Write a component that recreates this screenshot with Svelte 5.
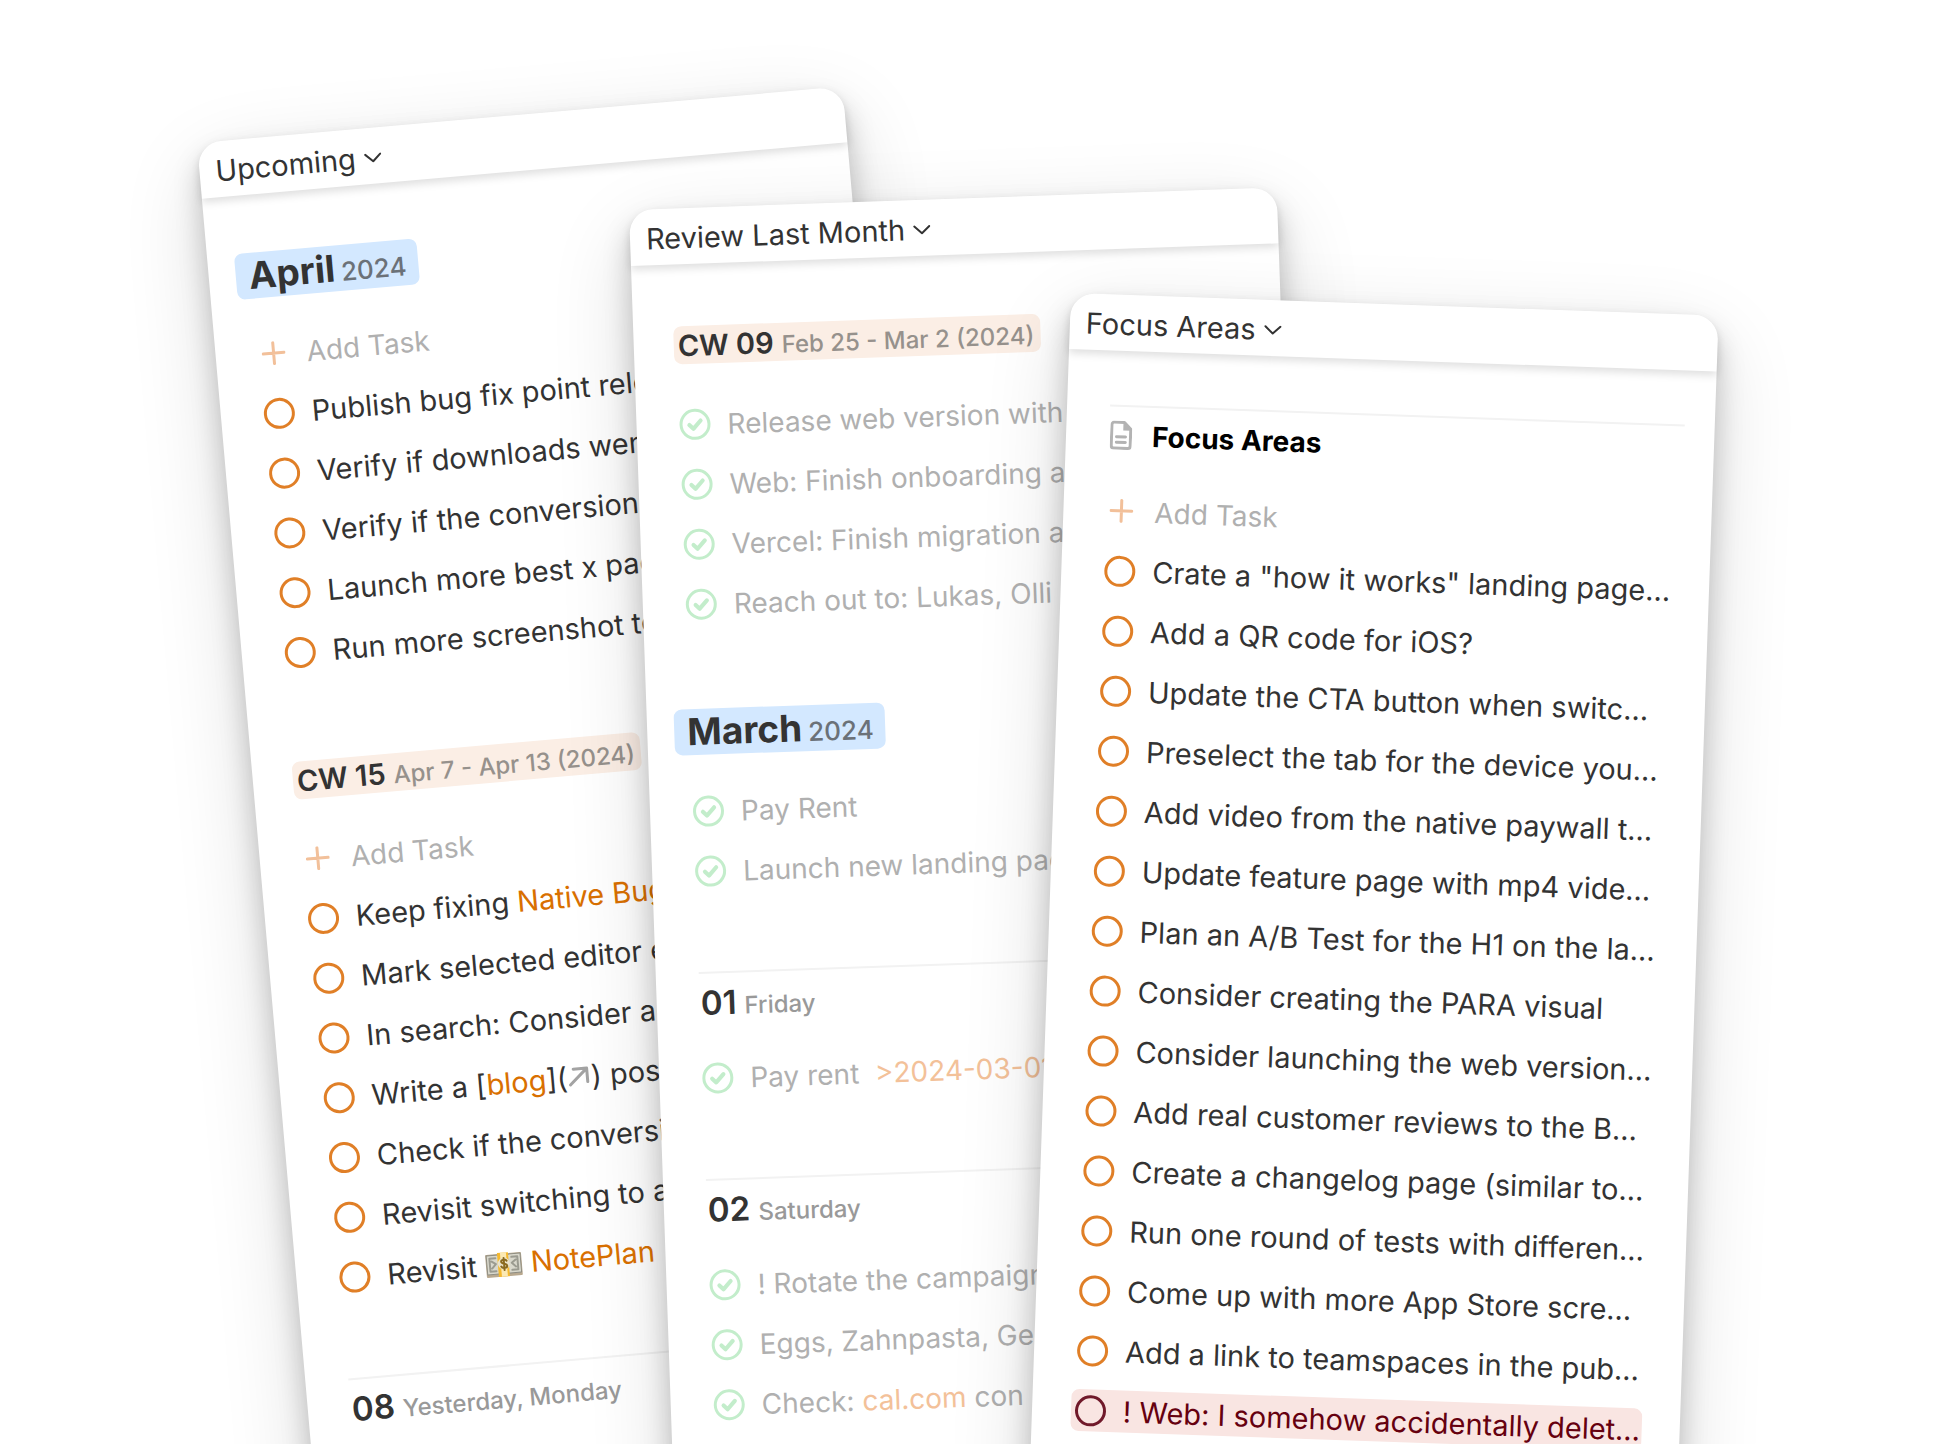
<script>
  const open = (...parts) => ({ done: false, parts });
  const done = (...parts) => ({ done: true, parts });
  const link = (text) => ({ kind: 'link', text });
  const arrow = { kind: 'arrow' };
  const cash = { kind: 'cash' };

  const cards = [
    {
      id: 'upcoming',
      title: 'Upcoming',
      sections: [
        {
          kind: 'month',
          title: 'April',
          detail: '2024',
          add: true,
          tasks: [
            open('Publish bug fix point release'),
            open('Verify if downloads went up'),
            open('Verify if the conversion'),
            open('Launch more best x pages'),
            open('Run more screenshot tests')
          ]
        },
        {
          kind: 'week',
          title: 'CW 15',
          detail: 'Apr 7 - Apr 13 (2024)',
          add: true,
          tasks: [
            open('Keep fixing ', link('Native Bugs')),
            open('Mark selected editor entry'),
            open('In search: Consider adding'),
            open('Write a [', link('blog'), '](', arrow, ') post'),
            open('Check if the conversion'),
            open('Revisit switching to a'),
            open('Revisit ', cash, ' ', link('NotePlan'))
          ]
        },
        { kind: 'day', title: '08', detail: 'Yesterday, Monday', add: false, tasks: [] }
      ]
    },
    {
      id: 'review',
      title: 'Review Last Month',
      sections: [
        {
          kind: 'week',
          title: 'CW 09',
          detail: 'Feb 25 - Mar 2 (2024)',
          add: false,
          tasks: [
            done('Release web version with'),
            done('Web: Finish onboarding and'),
            done('Vercel: Finish migration and'),
            done('Reach out to: Lukas, Olli')
          ]
        },
        {
          kind: 'month',
          title: 'March',
          detail: '2024',
          add: false,
          tasks: [done('Pay Rent'), done('Launch new landing page')]
        },
        {
          kind: 'day',
          title: '01',
          detail: 'Friday',
          add: false,
          tasks: [done('Pay rent \u00a0', link('>2024-03-01'))]
        },
        {
          kind: 'day',
          title: '02',
          detail: 'Saturday',
          add: false,
          tasks: [
            done('! Rotate the campaign'),
            done('Eggs, Zahnpasta, Gemüse'),
            done('Check: ', link('cal.com'), ' con')
          ]
        }
      ]
    },
    {
      id: 'focus',
      title: 'Focus Areas',
      sections: [
        {
          kind: 'note',
          title: 'Focus Areas',
          add: true,
          tasks: [
            open('Crate a "how it works" landing page…'),
            open('Add a QR code for iOS?'),
            open('Update the CTA button when switc…'),
            open('Preselect the tab for the device you…'),
            open('Add video from the native paywall t…'),
            open('Update feature page with mp4 vide…'),
            open('Plan an A/B Test for the H1 on the la…'),
            open('Consider creating the PARA visual'),
            open('Consider launching the web version…'),
            open('Add real customer reviews to the B…'),
            open('Create a changelog page (similar to…'),
            open('Run one round of tests with differen…'),
            open('Come up with more App Store scre…'),
            open('Add a link to teamspaces in the pub…'),
            { ...open('! Web: I somehow accidentally delet…'), urgent: true }
          ]
        }
      ]
    }
  ];
</script>

<main class="stage">
  {#each cards as card}
    <article class="card {card.id}">
      <header class="bar">
        <button type="button" class="picker">
          {card.title}
          <svg class="chevron" viewBox="0 0 18 10" aria-hidden="true"><path d="M1.5 1.5 9 8.5l7.5-7" /></svg>
        </button>
      </header>

      <div class="content">
        {#each card.sections as section}
          <section>
            <div class="head {section.kind}">
              {#if section.kind === 'note'}
                <svg class="doc" viewBox="0 0 22 29" aria-hidden="true">
                  <path class="outline" d="M4 1.5h10l6.500 6.500V25a2.500 2.500 0 0 1-2.500 2.500H4A2.500 2.500 0 0 1 1.500 25V4A2.500 2.500 0 0 1 4 1.500z" />
                  <path class="fold" d="M13 1v8.500h8.500z" />
                  <path class="outline" d="M6.500 16h9M6.500 21.500h9" />
                </svg>
              {/if}
              <h2>
                <strong>{section.title}</strong>
                {#if section.detail}<small>{section.detail}</small>{/if}
              </h2>
            </div>

            {#if section.add}
              <button type="button" class="row add">
                <svg class="plus" viewBox="0 0 24 24" aria-hidden="true"><path d="M12 1.5v21M1.5 12h21" /></svg>
                <span class="text">Add Task</span>
              </button>
            {/if}

            {#each section.tasks as task}
              <label class="row" class:done={task.done} class:urgent={task.urgent}>
                <span class="tick">
                  <input type="checkbox" checked={task.done} />
                  <svg viewBox="0 0 30 30" aria-hidden="true"><path d="m9.500 15.500 3.800 3.800 7.200-7.800" /></svg>
                </span>
                <span class="text">{#each task.parts as part}{#if part.kind === 'link'}<a href="#note">{part.text}</a>{:else if part.kind === 'arrow'}<svg class="arrow" viewBox="0 0 24 22" aria-hidden="true"><path d="M3 19 20 4M7 3.500h13.500V17" /></svg>{:else if part.kind === 'cash'}<svg class="cash" viewBox="0 0 38 26" aria-hidden="true"><rect class="back" x="1" y="2" width="36" height="23" rx="1" /><rect class="bill" x="2" y="3" width="34" height="19" /><path class="print" d="M5 6h6M5 6v13h6M33 6h-6M33 6v13h-6M7 9l4 3-4 4M31 9l-4 3 4 4" /><path class="band" d="M13 1h11v24H13z" /><path class="sheen" d="M16 1h6v24h-6z" /><circle class="seal" cx="19" cy="12" r="6" /><path class="dollar" d="M22 9.500c-1-2-5.500-1.800-5.500.5 0 2.800 5.700 1.600 5.700 4.500 0 2.500-5 2.500-6 .3M19.200 6.500v12" /></svg>{:else}{part}{/if}{/each}</span>
              </label>
            {/each}
          </section>
        {/each}
      </div>
    </article>
  {/each}
</main>

<style>
  :global(body) {
    margin: 0;
    background: #fff;
  }

  .stage {
    position: relative;
    height: 100vh;
    overflow: hidden;
    font-family: Inter, 'Liberation Sans', sans-serif;
    font-size: 29px;
    line-height: 36px;
    color: #333;
  }

  .card {
    position: absolute;
    box-sizing: border-box;
    width: 33.35%;
    min-height: 125vh;
    border-radius: 24px;
    background: #fff;
    box-shadow:
      0 16px 28px rgba(0, 0, 0, 0.22),
      0 28px 84px rgba(0, 0, 0, 0.14);
    transform-origin: 0 0;
  }

  .upcoming {
    left: 10.15%;
    top: 143px;
    transform: rotate(-5deg);
  }

  .review {
    left: 32.4%;
    top: 210px;
    transform: rotate(-2deg);
  }

  .focus {
    left: 55.15%;
    top: 293px;
    transform: rotate(2deg);
  }

  .bar {
    display: flex;
    align-items: center;
    height: 56px;
    padding: 4px 16px 0;
    box-sizing: border-box;
    border-radius: 24px 24px 0 0;
    box-shadow: 0 4px 8px rgba(0, 0, 0, 0.13);
  }

  button {
    font: inherit;
    color: inherit;
    background: none;
    border: 0;
    padding: 0;
    text-align: left;
    cursor: pointer;
  }

  .picker {
    display: flex;
    align-items: center;
    gap: 8px;
  }

  svg {
    fill: none;
    stroke-linecap: round;
    stroke-linejoin: round;
  }

  .chevron {
    width: 18px;
    height: 10px;
    stroke: #333;
    stroke-width: 2;
  }

  .content {
    display: flex;
    flex-direction: column;
    gap: 71px;
    padding: 54px 30px 0 43px;
  }

  .head {
    display: flex;
    box-sizing: border-box;
    height: 76px;
    align-items: flex-start;
  }

  h2 {
    display: flex;
    align-items: baseline;
    gap: 8px;
    margin: 0;
    font-size: 26px;
    font-weight: 500;
    white-space: nowrap;
  }

  small {
    font-size: 24px;
    font-weight: 500;
    line-height: 24px;
    color: #999;
  }

  .month {
    padding-top: 4px;
  }

  .month h2 {
    gap: 6px;
    margin-left: -16px;
    padding: 0 12px 0 13px;
    line-height: 46px;
    border-radius: 8px;
    background: #d3e8ff;
  }

  .month strong {
    font-size: 37px;
    font-weight: 700;
  }

  .month small {
    font-size: 26px;
    color: #6b7178;
  }

  .week {
    padding-top: 8px;
  }

  .week h2 {
    margin-left: -3px;
    padding: 2px 6px 0 4px;
    line-height: 36px;
    border-radius: 8px;
    background: #fbeee5;
  }

  .week strong {
    font-size: 29px;
    font-weight: 600;
  }

  .week small {
    color: #96918c;
  }

  .day,
  .note {
    border-top: 2px solid #f2f2f2;
    padding-top: 10px;
  }

  .day h2 {
    padding-left: 1px;
  }

  .day strong {
    font-size: 33px;
    font-weight: 600;
    line-height: 38px;
  }

  .note {
    gap: 20px;
    padding-left: 1px;
  }

  .note strong {
    font-size: 28px;
    font-weight: 700;
    line-height: 38px;
    color: #000;
  }

  .doc {
    width: 22px;
    height: 29px;
    margin-top: 4px;
  }

  .doc .outline {
    stroke: #b3b3b3;
    stroke-width: 3;
  }

  .doc .fold {
    fill: #b3b3b3;
  }

  .row {
    display: flex;
    align-items: center;
    box-sizing: border-box;
    height: 60px;
    gap: 17px;
    white-space: nowrap;
  }

  .add {
    width: 100%;
    gap: 21px;
    padding-left: 3px;
    font-size: 28px;
    color: #b0b0b0;
  }

  .plus {
    width: 24px;
    height: 24px;
    stroke: #f2c09a;
    stroke-width: 3;
  }

  .tick {
    display: grid;
    flex: none;
    width: 31px;
    height: 31px;
  }

  .tick input {
    grid-area: 1 / 1;
    appearance: none;
    width: 31px;
    height: 31px;
    margin: 0;
    border: 3px solid #e07f27;
    border-radius: 50%;
  }

  .tick svg {
    grid-area: 1 / 1;
    visibility: hidden;
    stroke: #c3edcb;
    stroke-width: 4;
    pointer-events: none;
  }

  .text {
    padding-top: 2px;
    white-space: pre;
  }

  a {
    color: #d97000;
    text-decoration: none;
  }

  .done {
    font-size: 28px;
    color: #b0b0b0;
  }

  .done input {
    border-color: #c3edcb;
  }

  .done svg {
    visibility: visible;
  }

  .done a {
    color: #f3c199;
  }

  .urgent {
    height: 42px;
    margin: 9px 8px 9px -4px;
    padding-left: 4px;
    border-radius: 8px;
    color: #66000f;
    background: #f9e5e2;
  }

  .urgent input {
    border-color: #70192a;
  }

  .arrow {
    width: 24px;
    height: 22px;
    stroke: #a3a3a3;
    stroke-width: 3;
  }

  .cash {
    width: 38px;
    height: 26px;
    vertical-align: -3px;
  }

  .cash .back {
    fill: #b9a98f;
  }

  .cash .bill {
    fill: #d9d8cc;
    stroke: #8f8e83;
  }

  .cash .print {
    stroke: #9b9b90;
    stroke-width: 2;
  }

  .cash .seal {
    fill: #eae3cb;
  }

  .cash .band {
    fill: #f5b92e;
  }

  .cash .sheen {
    fill: #fbe9b4;
  }

  .cash .dollar {
    stroke: #8a6a1f;
    stroke-width: 2;
  }
</style>
